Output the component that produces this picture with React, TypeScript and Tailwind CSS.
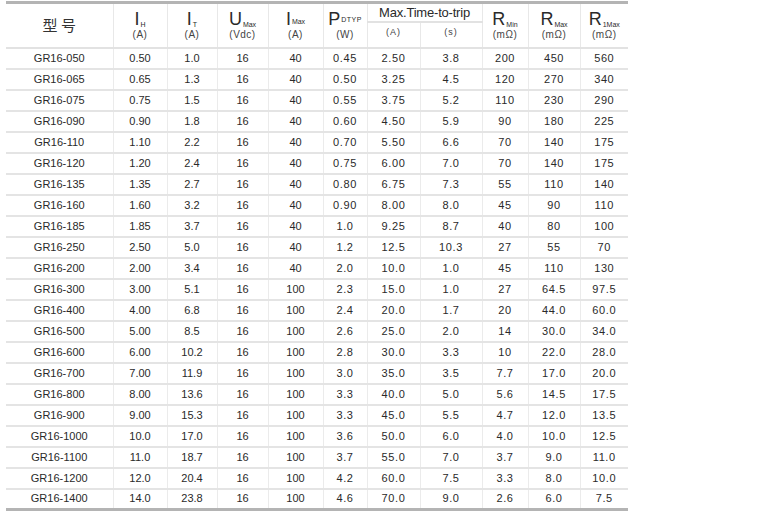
import React from "react";

const rows: string[][] = [
  ["GR16-050", "0.50", "1.0", "16", "40", "0.45", "2.50", "3.8", "200", "450", "560"],
  ["GR16-065", "0.65", "1.3", "16", "40", "0.50", "3.25", "4.5", "120", "270", "340"],
  ["GR16-075", "0.75", "1.5", "16", "40", "0.55", "3.75", "5.2", "110", "230", "290"],
  ["GR16-090", "0.90", "1.8", "16", "40", "0.60", "4.50", "5.9", "90", "180", "225"],
  ["GR16-110", "1.10", "2.2", "16", "40", "0.70", "5.50", "6.6", "70", "140", "175"],
  ["GR16-120", "1.20", "2.4", "16", "40", "0.75", "6.00", "7.0", "70", "140", "175"],
  ["GR16-135", "1.35", "2.7", "16", "40", "0.80", "6.75", "7.3", "55", "110", "140"],
  ["GR16-160", "1.60", "3.2", "16", "40", "0.90", "8.00", "8.0", "45", "90", "110"],
  ["GR16-185", "1.85", "3.7", "16", "40", "1.0", "9.25", "8.7", "40", "80", "100"],
  ["GR16-250", "2.50", "5.0", "16", "40", "1.2", "12.5", "10.3", "27", "55", "70"],
  ["GR16-200", "2.00", "3.4", "16", "40", "2.0", "10.0", "1.0", "45", "110", "130"],
  ["GR16-300", "3.00", "5.1", "16", "100", "2.3", "15.0", "1.0", "27", "64.5", "97.5"],
  ["GR16-400", "4.00", "6.8", "16", "100", "2.4", "20.0", "1.7", "20", "44.0", "60.0"],
  ["GR16-500", "5.00", "8.5", "16", "100", "2.6", "25.0", "2.0", "14", "30.0", "34.0"],
  ["GR16-600", "6.00", "10.2", "16", "100", "2.8", "30.0", "3.3", "10", "22.0", "28.0"],
  ["GR16-700", "7.00", "11.9", "16", "100", "3.0", "35.0", "3.5", "7.7", "17.0", "20.0"],
  ["GR16-800", "8.00", "13.6", "16", "100", "3.3", "40.0", "5.0", "5.6", "14.5", "17.5"],
  ["GR16-900", "9.00", "15.3", "16", "100", "3.3", "45.0", "5.5", "4.7", "12.0", "13.5"],
  ["GR16-1000", "10.0", "17.0", "16", "100", "3.6", "50.0", "6.0", "4.0", "10.0", "12.5"],
  ["GR16-1100", "11.0", "18.7", "16", "100", "3.7", "55.0", "7.0", "3.7", "9.0", "11.0"],
  ["GR16-1200", "12.0", "20.4", "16", "100", "4.2", "60.0", "7.5", "3.3", "8.0", "10.0"],
  ["GR16-1400", "14.0", "23.8", "16", "100", "4.6", "70.0", "9.0", "2.6", "6.0", "7.5"],
];

const widths = [107, 54, 50, 51, 55, 44, 53, 62, 46, 52, 48];

function Sym({ main, sub, unit, subClass = "" }: { main: string; sub: string; unit: string; subClass?: string }) {
  return (
    <div className="flex flex-col items-center">
      <div className="flex items-end leading-none">
        <span className="text-[18px] leading-none">{main}</span>
        <span className={"text-[7px] leading-none ml-[1px] " + subClass}>{sub}</span>
      </div>
      <span className="text-[10px] leading-none mt-[2px] tracking-[0.5px] text-[#444]">{unit}</span>
    </div>
  );
}

export default function App() {
  const head = "border-r border-[#e8e8e8] border-b-2 border-b-[#e2e2e2] align-middle p-0 font-normal leading-none";
  return (
    <div className="w-[774px] h-[517px] bg-white pl-[6px] pt-[1px]" style={{ fontFamily: '"Liberation Sans", Arial, sans-serif' }}>
      <table className="table-fixed border-collapse w-[622px] text-[#2a2a2a] border-t-[3px] border-t-[#b4b4b4] border-b-[3px] border-b-[#b4b4b4]">
        <colgroup>
          {widths.map((w, i) => (
            <col key={i} style={{ width: w }} />
          ))}
        </colgroup>
        <thead>
          <tr className="h-[19px]">
            <th rowSpan={2} className={head}>
              <span className="text-[15px] text-[#333]" style={{ fontFamily: '"Noto Sans CJK SC", "Liberation Sans", sans-serif' }}>型 号</span>
            </th>
            <th rowSpan={2} className={head}>
              <Sym main="I" sub="H" unit="(A)" />
            </th>
            <th rowSpan={2} className={head}>
              <Sym main="I" sub="T" unit="(A)" />
            </th>
            <th rowSpan={2} className={head}>
              <Sym main="U" sub="Max" unit="(Vdc)" subClass="text-[6px]" />
            </th>
            <th rowSpan={2} className={head}>
              <Sym main="I" sub="Max" unit="(A)" subClass="text-[6px] mb-[3px]" />
            </th>
            <th rowSpan={2} className={head}>
              <Sym main="P" sub="DTYP" unit="(W)" subClass="text-[6px] mb-[5px] tracking-[0.5px]" />
            </th>
            <th colSpan={2} className={head}>
              <span className="text-[13px] leading-none tracking-[-0.2px]">Max.Time-to-trip</span>
            </th>
            <th rowSpan={2} className={head}>
              <Sym main="R" sub="Min" unit="(mΩ)" subClass="text-[6px]" />
            </th>
            <th rowSpan={2} className={head}>
              <Sym main="R" sub="Max" unit="(mΩ)" subClass="text-[6px]" />
            </th>
            <th rowSpan={2} className="border-b-2 border-b-[#e2e2e2] align-middle p-0 font-normal leading-none">
              <Sym main="R" sub="1Max" unit="(mΩ)" subClass="text-[6px]" />
            </th>
          </tr>
          <tr className="h-[26px]">
            <th className={head + " pb-[5px] text-[9px] tracking-[1px] text-[#444]"}>(A)</th>
            <th className={head + " pb-[5px] text-[9px] tracking-[1px] text-[#444]"}>(s)</th>
          </tr>
        </thead>
        <tbody>
          {rows.map((r, ri) => (
            <tr key={ri} className="h-[21px]">
              {r.map((c, ci) => (
                <td
                  key={ci}
                  className={
                    "p-0 text-center text-[11px] leading-none " +
                    (ri < rows.length - 1 ? "border-b-2 border-b-[#e4e4e4] " : "") +
                    (ci < 10 ? "border-r border-r-[#ebebeb] " : "") +
                    (ci >= 5 ? "tracking-[0.6px]" : "")
                  }
                >
                  {c}
                </td>
              ))}
            </tr>
          ))}
        </tbody>
      </table>
    </div>
  );
}
